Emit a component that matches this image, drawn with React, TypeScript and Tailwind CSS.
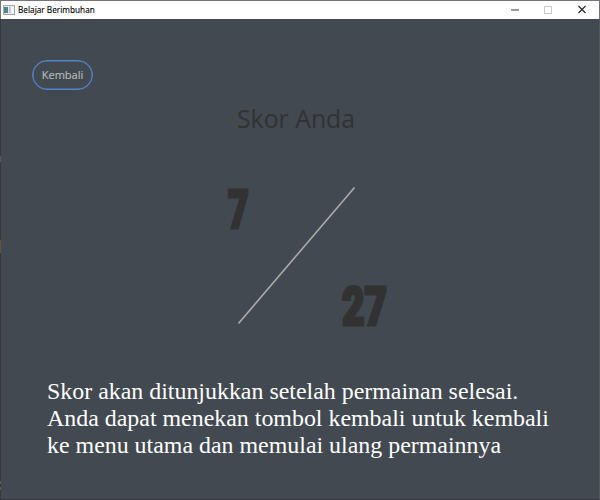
function TitleBar() {
  return (
    <header className="flex h-[19px] w-full items-center border-t border-l border-[#737378] bg-white">
      <svg className="ml-[2px] shrink-0" width="12" height="10" viewBox="0 0 12 10">
        <rect x="0.5" y="0.5" width="11" height="9" fill="#e9eaec" stroke="#a4a7ac" />
        <rect x="1" y="2" width="4" height="6" fill="#4d8791" />
        <rect x="6" y="2" width="1.5" height="6" fill="#b7bec5" />
        <rect x="8.5" y="2" width="2" height="6" fill="#ffffff" />
      </svg>
      <h1 className="mb-px ml-[3px] w-[77px] origin-left scale-x-[0.91] text-[9px] leading-none whitespace-nowrap text-black [-webkit-text-stroke:0.1px_#000]">
        Belajar Berimbuhan
      </h1>
      <svg className="ml-auto" width="90" height="18" viewBox="510 1 90 18" fill="none">
        <path d="M511 10h8" stroke="#555" strokeWidth="1.2" />
        <rect x="544.5" y="6.5" width="7" height="7" stroke="#ccc" />
        <path d="M578.5 6l7 7M585.5 6l-7 7" stroke="#222" strokeWidth="1.1" />
        <path d="M599.5 1v18" stroke="#737378" />
      </svg>
    </header>
  );
}

function WindowEdge() {
  return (
    <div className="flex w-px shrink-0 flex-col bg-[#35383c]">
      <div className="mt-[137px] h-[6px] bg-[#55585c]" />
      <div className="mt-[78px] h-[13px] bg-[#66523c]" />
      <div className="mt-[228px] h-[3px] bg-[#6b5850]" />
      <div className="mt-[3px] h-[3px] bg-[#6b5850]" />
    </div>
  );
}

export default function App() {
  return (
    <div className="flex h-[500px] w-[600px] flex-col overflow-hidden bg-[#424951] font-['Noto_Sans','Open_Sans',sans-serif]">
      <TitleBar />
      <div className="flex flex-1">
        <WindowEdge />
        <main className="flex flex-1 flex-col border-r border-b border-r-[#55575d] border-b-[#35383c] pt-[41px]">
          <button className="ml-[31px] flex h-[30px] w-[61px] items-center justify-center rounded-full border border-[#5584cc] font-['Open_Sans',sans-serif] text-[11px] text-[#b5b5b5] shadow-[inset_0_0_0_0.5px_#5584cc] [-webkit-text-stroke:0.2px_#b5b5b5]">
            <span className="mt-px">Kembali</span>
          </button>
          <h2 className="mt-[10px] ml-[236px] h-[37px] w-[120px] origin-left scale-x-[0.955] font-['Open_Sans',sans-serif] text-[26px] leading-[37px] whitespace-nowrap text-[#323232]">
            Skor Anda
          </h2>
          <section className="mt-[50px] ml-[227px] flex h-[140px] font-['Roboto',sans-serif] text-[54px] leading-[41px] font-black text-[#323232]">
            <span className="mt-[2px] h-[41px] w-[10px] origin-left scale-x-[0.66] [-webkit-text-stroke:3.2px_#323232]">7</span>
            <svg width="118" height="138" viewBox="0 0 118 138" className="shrink-0">
              <path d="M0.5 136.5L116.5 0.5" stroke="#aaa" strokeWidth="1.6" />
            </svg>
            <span className="mt-[99px] -ml-[14px] h-[41px] origin-left scale-x-[0.72] [-webkit-text-stroke:3.2px_#323232]">27</span>
          </section>
          <p className="mt-[51px] ml-[46px] w-fit origin-left scale-x-[0.996] font-['Liberation_Serif',serif] text-[24px] leading-[27px] whitespace-nowrap text-white">
            Skor akan ditunjukkan setelah permainan selesai.
            <br />
            Anda dapat menekan tombol kembali untuk kembali
            <br />
            ke menu utama dan memulai ulang permainnya
          </p>
        </main>
      </div>
    </div>
  );
}
